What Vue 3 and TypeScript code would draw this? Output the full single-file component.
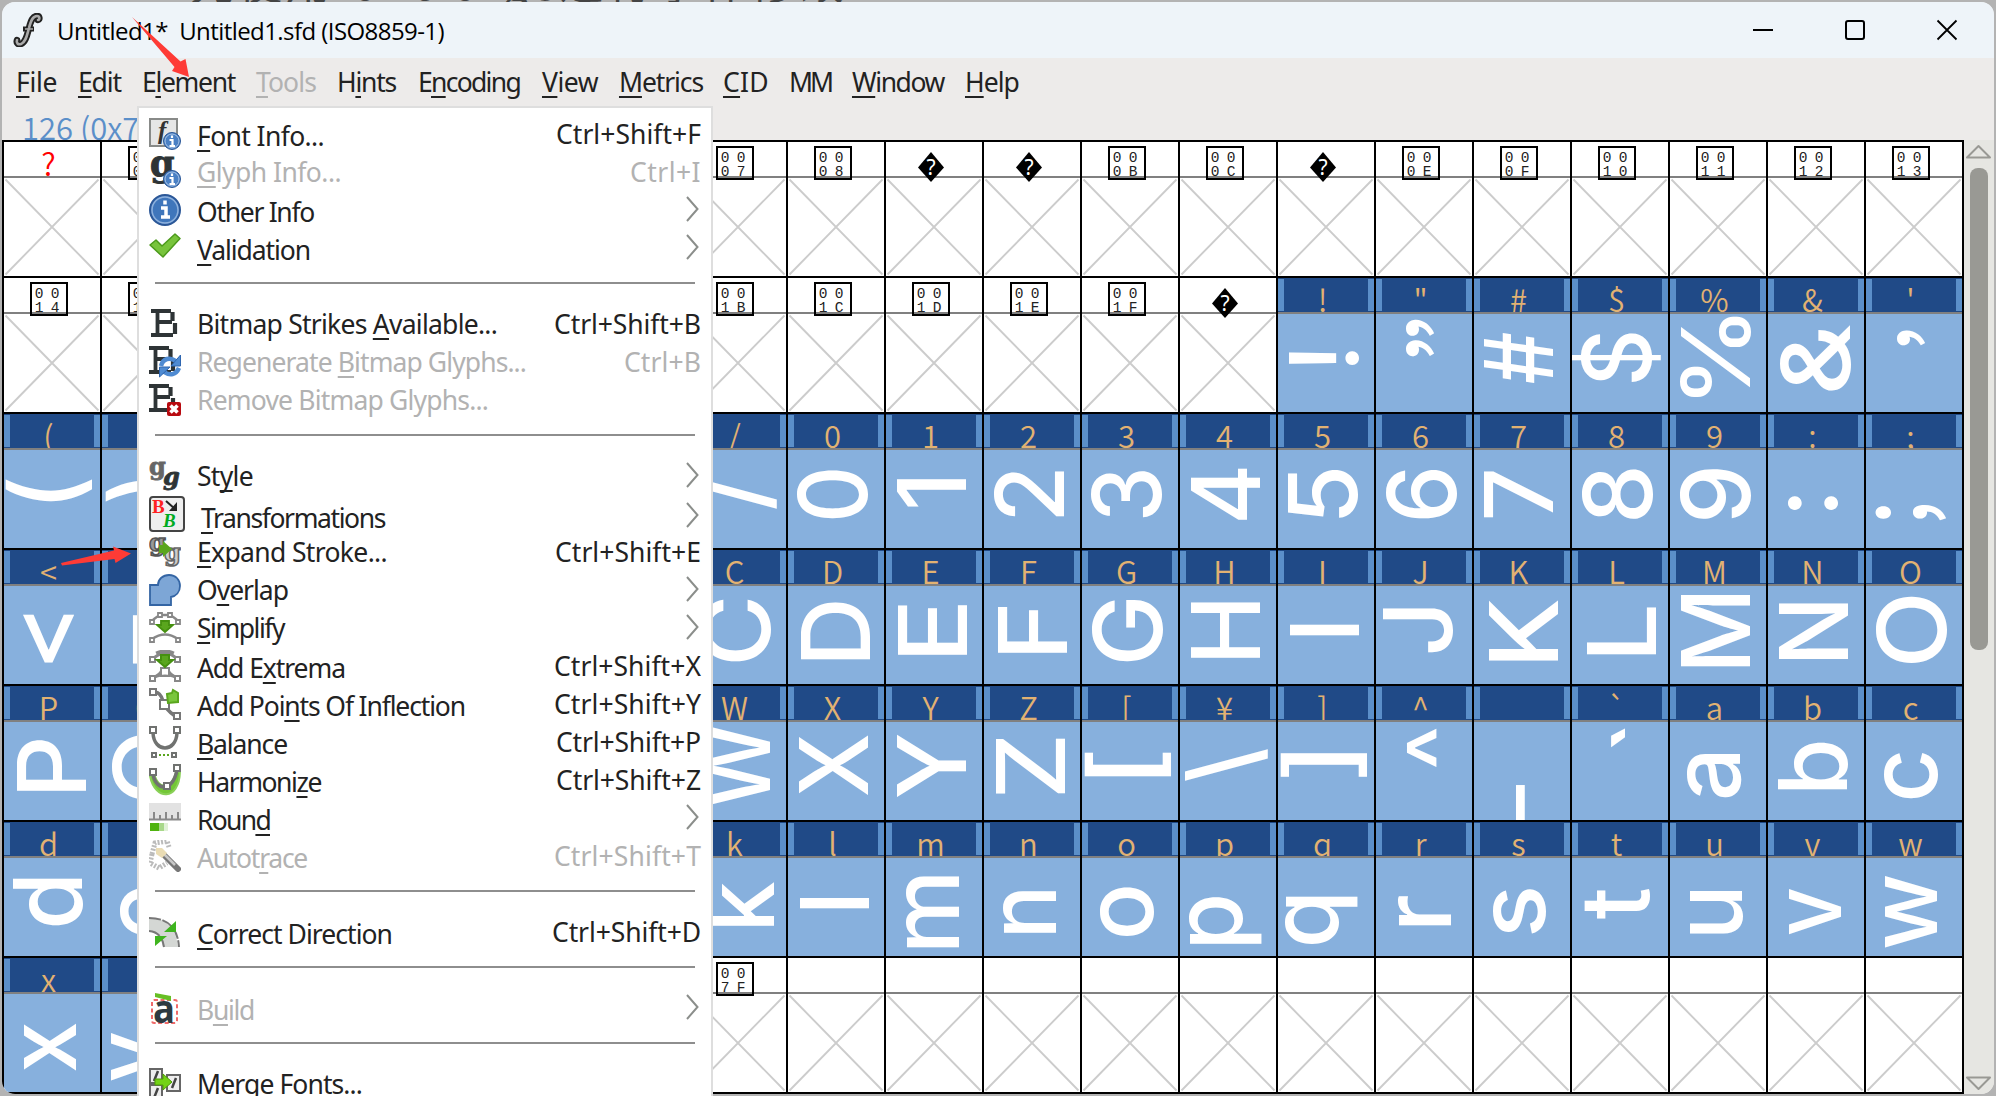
<script setup lang="ts">
type Kind = 'hex' | 'unknown' | 'missing' | 'glyph' | 'empty'
interface Cell { kind: Kind; label: string; ch: string; curly: boolean; transform: string }
interface MenuItem {
  sep?: boolean
  icon?: string
  label?: string
  key?: number
  width?: number
  drop?: number
  shortcut?: string
  sw?: number
  sub?: boolean
  disabled?: boolean
}

const menus = [
  { t: 'File', k: 0, x: 16, w: 41 },
  { t: 'Edit', k: 0, x: 78, w: 43 },
  { t: 'Element', k: 1, x: 142, w: 93 },
  { t: 'Tools', k: 0, x: 256, w: 60, off: true },
  { t: 'Hints', k: 1, x: 337, w: 59 },
  { t: 'Encoding', k: 1, x: 418, w: 102 },
  { t: 'View', k: 0, x: 542, w: 56 },
  { t: 'Metrics', k: 0, x: 619, w: 84 },
  { t: 'CID', k: 0, x: 723, w: 46 },
  { t: 'MM', k: -1, x: 789, w: 42 },
  { t: 'Window', k: 0, x: 852, w: 92 },
  { t: 'Help', k: 0, x: 965, w: 54 },
].map((m, i, all) => ({ ...m, gap: i ? m.x - all[i - 1].x - all[i - 1].w : m.x - 2 }))

const items: MenuItem[] = [
  { icon: 'font', label: 'Font Info...', key: 0, width: 127, drop: 2, shortcut: 'Ctrl+Shift+F', sw: 145 },
  { icon: 'glyph', label: 'Glyph Info...', key: 0, width: 144, shortcut: 'Ctrl+I', sw: 71, disabled: true },
  { icon: 'info', label: 'Other Info', key: -1, width: 117, drop: 2, sub: true },
  { icon: 'check', label: 'Validation', key: 0, width: 113, drop: 2, sub: true },
  { sep: true },
  { icon: 'bitmap', label: 'Bitmap Strikes Available...', key: 15, width: 300, shortcut: 'Ctrl+Shift+B', sw: 147 },
  { icon: 'regen', label: 'Regenerate Bitmap Glyphs...', key: 11, width: 329, shortcut: 'Ctrl+B', sw: 77, disabled: true },
  { icon: 'remove', label: 'Remove Bitmap Glyphs...', key: -1, width: 291, disabled: true },
  { sep: true },
  { icon: 'style', label: 'Style', key: 2, width: 56, sub: true },
  { icon: 'transform', label: 'Transformations', key: 0, width: 184, drop: 4, sub: true },
  { icon: 'expand', label: 'Expand Stroke...', key: 0, width: 190, shortcut: 'Ctrl+Shift+E', sw: 146 },
  { icon: 'overlap', label: 'Overlap', key: 1, width: 91, sub: true },
  { icon: 'simplify', label: 'Simplify', key: 0, width: 87, sub: true },
  { icon: 'extrema', label: 'Add Extrema', key: 5, width: 148, drop: 2, shortcut: 'Ctrl+Shift+X', sw: 147 },
  { icon: 'inflect', label: 'Add Points Of Inflection', key: 7, width: 268, drop: 2, shortcut: 'Ctrl+Shift+Y', sw: 147 },
  { icon: 'balance', label: 'Balance', key: 0, width: 90, drop: 2, shortcut: 'Ctrl+Shift+P', sw: 145 },
  { icon: 'harmonize', label: 'Harmonize', key: 7, width: 124, drop: 2, shortcut: 'Ctrl+Shift+Z', sw: 145 },
  { icon: 'round', label: 'Round', key: 4, width: 73, drop: 2, sub: true },
  { icon: 'autotrace', label: 'Autotrace', key: 5, width: 110, drop: 2, shortcut: 'Ctrl+Shift+T', sw: 147, disabled: true },
  { sep: true },
  { icon: 'direction', label: 'Correct Direction', key: 0, width: 195, drop: 2, shortcut: 'Ctrl+Shift+D', sw: 149 },
  { sep: true },
  { icon: 'build', label: 'Build', key: 1, width: 57, drop: 2, sub: true, disabled: true },
  { sep: true },
  { icon: 'merge', label: 'Merge Fonts...', key: -1, width: 165 },
]

function parts(text: string, key: number): [string, string, string] {
  return key < 0 ? [text, '', ''] : [text.slice(0, key), text[key], text.slice(key + 1)]
}

/* Spreads or tightens the letters of a line so that it takes the given width. */
const vFit = {
  mounted(el: HTMLElement, binding: { value: number }) {
    const count = (el.textContent ?? '').length
    el.style.letterSpacing = (binding.value - el.getBoundingClientRect().width) / count + 'px'
  },
}

/* Centre of the ink in the cell body, and its extent along the baseline. */
const ink: Record<string, [number, number, number?]> = {
  '!': [46, 44], '"': [44.5, 23.7, 37], '#': [44, 44, 51], $: [44.7, 44, 50], '%': [45.5, 43, 82], '&': [47, 44, 66],
  "'": [45.5, 24.2, 16], '(': [44, 40], ')': [46, 41], '/': [45.5, 43],
  '0': [44.7, 44, 49], '1': [45, 43, 28], '2': [45, 44, 46], '3': [44.7, 44, 47], '4': [45, 44, 52], '5': [44.7, 44, 49],
  '6': [45, 44, 49], '7': [44.5, 44, 47], '8': [45, 44, 50], '9': [45, 44, 50],
  ':': [45, 53], ';': [45, 62.3, 16], '<': [44.7, 53, 49], '=': [45, 53, 49],
  C: [45.3, 44.5, 62], D: [47.7, 45, 58], E: [46.4, 44, 51], F: [48, 44, 47], G: [45.3, 44.5, 62], H: [45, 44, 57],
  I: [46, 44], J: [42.4, 44.3, 44], K: [49.3, 44.5, 61], L: [49, 45, 48], M: [45.3, 44.6, 73], N: [45, 45, 57], O: [45, 43.8, 67],
  P: [47.4, 43.5, 52], Q: [48, 45, 66], W: [45, 44, 83], X: [45.5, 43.5, 60], Y: [45, 44, 63], Z: [46.4, 44, 56],
  '[': [45.8, 42.8, 25], '\\': [46, 43], ']': [45.5, 42.8, 25], '^': [45.7, 26, 39], _: [46, 85, 44], '`': [46.4, 15.5, 20],
  a: [44, 53.5, 45], b: [45.4, 44, 48], c: [44.8, 53.6, 46], d: [43.7, 44, 47], e: [44.8, 53.5, 48], k: [49, 46, 45], l: [46, 45],
  m: [46, 54, 72], n: [45.5, 54, 43], o: [44.5, 54, 49], p: [45.5, 62.5, 48], q: [43.5, 62.5, 48], r: [48.8, 53, 30],
  s: [45, 53.5, 45], t: [45, 46, 31], u: [46.3, 54.5, 44], v: [46.6, 53.5, 46], w: [45, 53.5, 73], x: [45.5, 53, 48], y: [45, 62.5, 48],
}

const shapeFor: Record<string, string> = { '"': '”', "'": '’' }
const ctx = document.createElement('canvas').getContext('2d')!

function place(source: string, ch: string, curly: boolean): string {
  ctx.font = curly ? '500 95px "Noto Sans CJK SC", sans-serif' : '500 95px Inter, sans-serif'
  const [cx, cy, extent] = ink[source] ?? [45, 44]
  const m = ctx.measureText(ch)
  const width = m.actualBoundingBoxRight + m.actualBoundingBoxLeft
  const scale = extent ? extent / width : 1
  const midX = ((m.actualBoundingBoxRight - m.actualBoundingBoxLeft) / 2) * scale
  const midY = (m.actualBoundingBoxDescent - m.actualBoundingBoxAscent) / 2
  return `translate(${cx - midY} ${cy + midX}) rotate(-90) scale(${scale} 1)`
}

function plain(kind: Kind, label = ''): Cell {
  return { kind, label, ch: '', curly: false, transform: '' }
}

const cells: Cell[] = []
for (let code = 0; code < 140; code++) {
  if (code === 0) cells.push(plain('missing', '?'))
  else if ([9, 10, 13, 32].includes(code)) cells.push(plain('unknown'))
  else if (code < 32 || code === 127) cells.push(plain('hex', code.toString(16).toUpperCase().padStart(4, '0')))
  else if (code < 127) {
    const c = String.fromCharCode(code)
    const ch = shapeFor[c] ?? c
    const curly = c === '"' || c === "'" || c === ';'
    const label = c === '\\' ? '¥' : c === '_' ? '' : c
    cells.push({ kind: 'glyph', label, ch, curly, transform: place(c, ch, curly) })
  } else cells.push(plain('empty'))
}
</script>

<template>
  <div class="desktop">
    <div class="behind"><span>先使用fontforge进行字体修改</span></div>
    <div class="window">
      <header class="titlebar">
        <svg class="logo" width="30" height="34" viewBox="0 0 30 34">
          <path d="M4 27c-1 3 1 5 4 4 5-2 6-9 8-16 2-8 4-12 8-12 3 0 3 4 1 4" fill="none" stroke="#222" stroke-width="6.500" stroke-linecap="round" />
          <path d="M10 16h11" stroke="#222" stroke-width="5" />
          <path d="M4 27c-1 3 1 5 4 4 5-2 6-9 8-16 2-8 4-12 8-12 3 0 3 4 1 4" fill="none" stroke="#aaa" stroke-width="2.600" stroke-linecap="round" />
          <path d="M12 16h8" stroke="#aaa" stroke-width="1.600" />
        </svg>
        <span v-fit="387" class="title">Untitled1*&nbsp; Untitled1.sfd (ISO8859-1)</span>
        <div class="controls">
          <svg width="22" height="22" viewBox="0 0 22 22"><path d="M1 11h20" stroke="#000" stroke-width="2" /></svg>
          <svg width="22" height="22" viewBox="0 0 22 22"><rect x="2" y="2" width="18" height="18" rx="2" fill="none" stroke="#000" stroke-width="2" /></svg>
          <svg width="22" height="22" viewBox="0 0 22 22"><path d="M1.500 1.500l19 19M20.500 1.500l-19 19" stroke="#000" stroke-width="1.800" /></svg>
        </div>
      </header>

      <nav class="menubar">
        <span v-for="m in menus" :key="m.t" v-fit="m.w" :class="{ off: m.off }" :style="{ marginLeft: m.gap + 'px' }">{{ parts(m.t, m.k)[0] }}<u>{{ parts(m.t, m.k)[1] }}</u>{{ parts(m.t, m.k)[2] }}</span>
      </nav>
      <div class="status">126 (0x7E)</div>

      <main class="content">
        <div class="grid">
          <div v-for="(c, i) in cells" :key="i" class="cell" :class="c.kind">
            <div class="head">
              <span v-if="c.kind === 'glyph' || c.kind === 'missing'" class="name">{{ c.label }}</span>
              <svg v-else-if="c.kind === 'hex'" class="box" width="38" height="34">
                <rect x="1" y="1" width="36" height="32" fill="none" stroke="#000" stroke-width="2" />
                <g font-family="'Liberation Mono', monospace" font-size="14.500" fill="#222" text-anchor="middle">
                  <text x="9" y="16">{{ c.label[0] }}</text><text x="25" y="16">{{ c.label[1] }}</text>
                  <text x="9" y="30">{{ c.label[2] }}</text><text x="25" y="30">{{ c.label[3] }}</text>
                </g>
              </svg>
              <svg v-else-if="c.kind === 'unknown'" class="diamond" width="28" height="32">
                <path d="M14 1L27 16.500 14 31 1 16.500z" />
                <text x="14" y="24" fill="#fff" font-family="'Noto Sans', sans-serif" font-size="21" text-anchor="middle">?</text>
              </svg>
            </div>
            <svg class="body" width="96" height="98" viewBox="0 0 96 98">
              <text v-if="c.kind === 'glyph'" class="shape" :class="{ curly: c.curly }" :transform="c.transform">{{ c.ch }}</text>
              <path v-else d="M1.500 1.500l93 95M94.500 1.500l-93 95" stroke="#ccc" stroke-width="1.900" />
            </svg>
          </div>
        </div>
        <aside class="scroll">
          <svg width="28" height="28"><path d="M3 17.500h23L14.500 6z" fill="none" stroke="#999994" stroke-width="2" stroke-linejoin="round" /></svg>
          <div class="thumb"></div>
          <svg width="28" height="20"><path d="M3 3.500h23L14.500 15z" fill="none" stroke="#999994" stroke-width="2" stroke-linejoin="round" /></svg>
        </aside>
      </main>
    </div>

    <div class="menu">
      <template v-for="(it, i) in items" :key="i">
        <div v-if="it.sep" class="sep"></div>
        <div v-else class="item" :class="{ disabled: it.disabled, big: it.icon === 'transform' }">
          <svg class="icon" :width="it.icon === 'transform' ? 36 : 32" :height="it.icon === 'transform' ? 36 : 32" :viewBox="it.icon === 'transform' ? '0 0 36 36' : '0 0 32 32'">
            <g v-if="it.icon === 'font'">
              <rect x="1" y="1" width="27" height="27" fill="#e6e6e6" stroke="#888a88" stroke-width="2" />
              <text x="9" y="21" font-family="'Liberation Serif', serif" font-style="italic" font-weight="bold" font-size="25" fill="#333">f</text>
            </g>
            <text v-if="it.icon === 'glyph'" x="1" y="20" font-family="'DejaVu Serif', serif" font-weight="bold" font-size="35" fill="#2e3436" stroke="#2e3436">g</text>
            <g v-if="it.icon === 'font' || it.icon === 'glyph'">
              <circle cx="23" cy="23" r="8.500" fill="#4a80c4" stroke="#2b5797" />
              <circle cx="23" cy="23" r="7" fill="none" stroke="#a9c4e6" />
              <path d="M23 17.500v2.500M20.500 22h3v6M20.500 28h5.500" stroke="#fff" stroke-width="2.200" fill="none" />
            </g>
            <g v-if="it.icon === 'info'">
              <circle cx="16" cy="16" r="15" fill="#3f76bb" stroke="#2b5797" stroke-width="2" />
              <circle cx="16" cy="16" r="13" fill="none" stroke="#8fb1dc" stroke-width="1.500" />
              <path d="M16 6.500v4M12 14h5v10M12 23h9" stroke="#fff" stroke-width="3.500" fill="none" />
            </g>
            <path v-if="it.icon === 'check'" d="M1 13l6-5 6 6L26 2l5 4.500L14 25z" fill="#78c43c" stroke="#4c9a1c" stroke-width="1.500" stroke-linejoin="round" />
            <g v-if="it.icon === 'bitmap' || it.icon === 'regen' || it.icon === 'remove'" :transform="it.icon === 'bitmap' ? 'translate(2 1)' : ''">
              <path d="M0 2h20M6 13h15M0 26h22M6.500 2v24" stroke="#2e3436" stroke-width="3.800" fill="none" />
              <path d="M21.500 3v9M24 14v11" stroke="#2e3436" stroke-width="4.200" fill="none" />
            </g>
            <g v-if="it.icon === 'regen'" fill="none" stroke="#4f8bd2" stroke-width="4.500">
              <path d="M12 20c2-8 9-9 15-5M30 22c-3 7-9 8-15 4" />
              <path d="M31.500 9v11H22zM10.500 31V21H21z" fill="#4f8bd2" stroke="#2f66b0" stroke-width="1" />
            </g>
            <g v-if="it.icon === 'remove'">
              <rect x="18" y="18" width="14" height="14" rx="2" fill="#b80a10" />
              <path d="M21.500 21.500l7 7M28.500 21.500l-7 7" stroke="#fff" stroke-width="3.600" />
            </g>
            <g v-if="it.icon === 'style'" font-family="'DejaVu Serif', serif" font-weight="bold" font-size="24">
              <text x="0" y="15" fill="#666" stroke="#666" stroke-width=".8">g</text><text x="14" y="25" font-style="italic" fill="#2e3436" stroke="#2e3436" stroke-width=".8">g</text>
            </g>
            <g v-if="it.icon === 'transform'">
              <rect x="1" y="1" width="34" height="34" rx="3" fill="#eee" stroke="#444" stroke-width="2" />
              <g font-family="'Liberation Serif', serif" font-weight="bold" font-size="19">
                <text x="3" y="17" fill="#ff2222">B</text>
                <text x="14" y="31" fill="#00aa22" font-style="italic">B</text>
              </g>
              <path d="M17 5l9 8" stroke="#222" stroke-width="2" /><path d="M28 6v9h-8z" fill="#222" />
            </g>
            <g v-if="it.icon === 'expand'">
              <g font-family="'DejaVu Serif', serif" font-weight="bold" font-size="24">
                <text x="0" y="15" fill="#999" stroke="#555" stroke-width="1.500">g</text><text x="15" y="25" fill="#ccc" stroke="#666" stroke-width="1.500">g</text>
              </g>
              <path d="M10 9h4V5l9 8-9 8v-4h-4z" fill="#5aa61e" />
            </g>
            <path v-if="it.icon === 'overlap'" d="M1 11h8C9 5 14 1 20 1c7 0 11 5 11 11s-4 10-9 11v8H1z" fill="#7da6d6" stroke="#3465a4" stroke-width="1.800" />
            <g v-if="it.icon === 'simplify'" fill="none" stroke="#888" stroke-width="1.800">
              <path d="M3 9Q8 4 12 3h8Q24 4 29 9M3 27Q16 18 29 27" stroke-width="2.600" />
              <path d="M1 8h4v4H1zM9 1h4v4H9zM19 1h4v4h-4zM27 8h4v4h-4zM1 26h4v4H1zM27 26h4v4h-4z" fill="#fff" />
              <path d="M12 9h8v4h4l-8 7-8-7h4z" fill="#5aa61e" stroke="#459010" />
            </g>
            <g v-if="it.icon === 'extrema'" fill="none" stroke="#888" stroke-width="2">
              <path d="M3 10Q16-4 29 10M7 3q9-4 18 0M3 28q8-3 10-8M29 28q-8-3-10-8" stroke-width="3" />
              <path d="M1 7h5v5H1zM26 7h5v5h-5zM1 26h5v5H1zM26 26h5v5h-5zM12 18h8v8h-8z" fill="#fff" />
              <path d="M6 27q10-3 20 0" />
              <path d="M12 5h8v5h4l-8 7-8-7h4z" fill="#5aa61e" stroke="#459010" />
            </g>
            <g v-if="it.icon === 'inflect'" fill="none" stroke="#777" stroke-width="2">
              <path d="M6 4q6 1 8 9t12 15" stroke-width="3.500" />
              <path d="M1 1h6v6H1zM11 12h9v9h-9zM25 25h6v6h-6z" fill="#fff" />
              <path d="M18 6l5-1 1-3 5 3v9l-10 1z" fill="#79c63c" stroke="#5aa61e" />
            </g>
            <g v-if="it.icon === 'balance'" fill="none" stroke="#707270" stroke-width="2">
              <path d="M4 7c1 20 23 20 24 0" stroke-width="3.500" />
              <path d="M1 1h6v6H1zM25 1h6v6h-6zM3 27h4v4H3zM23 27h4v4h-4z" fill="#fff" />
              <path d="M10 29h11" stroke="#5aa61e" stroke-dasharray="2 2" />
            </g>
            <g v-if="it.icon === 'harmonize'" fill="none" stroke="#707270" stroke-width="2">
              <path d="M1 12c5 25 29 25 30-4l-4 0c-4 16-16 20-22 2z" fill="#73c736" stroke="#8ad058" />
              <path d="M4 10c3 18 20 18 24-4" stroke-width="3.500" />
              <path d="M1 5h6v6H1zM25 1h6v6h-6zM15 19h6v6h-6z" fill="#fff" />
            </g>
            <g v-if="it.icon === 'round'">
              <rect x="0" y="1" width="32" height="17" fill="#e2e2e2" />
              <path d="M0 17.500h32M5 10v7M11 13v4M17 10v7M23 13v4M29 10v7" stroke="#888" stroke-width="2" />
              <rect x="1" y="21" width="9" height="8" fill="#4fb30f" /><rect x="10" y="21" width="5" height="8" fill="#a8d88a" /><rect x="15" y="21" width="4" height="8" fill="#e0f1d6" />
            </g>
            <g v-if="it.icon === 'autotrace'">
              <path d="M3 14L6 3l12-2 2 6M3 14l-2 9 9 5 8-5" fill="none" stroke="#bbb" stroke-width="5" stroke-dasharray="2 1.500" />
              <path d="M12 12l17 17" stroke="#777" stroke-width="6" stroke-linecap="round" />
              <path d="M10 9l16 16" stroke="#c8c8c8" stroke-width="2.500" />
              <path d="M7 8l6 0 5 5-5 5-6-4z" fill="#eadcb4" />
            </g>
            <g v-if="it.icon === 'direction'">
              <path d="M0 2q26 0 29 29H14Q12 18 0 15z" fill="#d4d7d4" />
              <path d="M0 2q28 0 30 29M0 15q13 1 15 16" fill="none" stroke="#777" stroke-width="2" stroke-dasharray="12 1.500" />
              <path d="M15 16h12V5zM6 30V20h12z" fill="#3fb51f" />
            </g>
            <g v-if="it.icon === 'build'">
              <rect x="3" y="8" width="25" height="23" rx="2" fill="none" stroke="#f06a6a" stroke-width="2" stroke-dasharray="4 2.500" />
              <text x="4" y="31" font-family="'Open Sans', sans-serif" font-weight="bold" font-size="39" textLength="22" lengthAdjust="spacingAndGlyphs" fill="#2e3a40">a</text>
              <path d="M6 1l16 3v5L6 5z" fill="#67bf24" />
            </g>
            <g v-if="it.icon === 'merge'">
              <path d="M1 1h12v14H1zM1 17h12v14H1zM18 7h13v16H18z" fill="#eee" stroke="#666" stroke-width="2" />
              <path d="M9 3L5 13M9 20L5 30M27 10l-4 10" stroke="#444" stroke-width="2.500" />
              <path d="M6 11h8V6l9 8-9 8v-5H6z" fill="#73d216" stroke="#4e9a06" />
            </g>
          </svg>
          <span v-fit="it.width" class="label" :style="{ marginTop: (it.drop ?? 0) * 2 + 'px' }">{{ parts(it.label!, it.key!)[0] }}<u>{{ parts(it.label!, it.key!)[1] }}</u>{{ parts(it.label!, it.key!)[2] }}</span>
          <span v-if="it.shortcut" v-fit="it.sw" class="shortcut">{{ it.shortcut }}</span>
          <svg v-if="it.sub" class="arrow" width="14" height="26" viewBox="0 0 14 26"><path d="M1 1l10.500 12L1 25" fill="none" stroke="#8b8e8b" stroke-width="2" /></svg>
        </div>
      </template>
    </div>

    <svg class="marks" width="260" height="600">
      <path d="M132 17L180.500 61.500 185.500 59 189 77 172 71 174.500 67z" fill="#fe3b36" />
      <path d="M61 563L114 550.500 113 546.500 131 553.500 115.500 563 114.500 559 62 565.500z" fill="#fe3b36" />
    </svg>
  </div>
</template>

<style>
body { margin: 0; overflow: hidden; }
</style>

<style scoped>
.desktop { position: relative; width: 1996px; height: 1096px; overflow: hidden; background: #b3b3b3; box-sizing: border-box; padding: 2px; }
.behind { position: absolute; left: 190px; top: 0; height: 2px; width: 700px; overflow: hidden; color: #444; font: 44px/44px "Noto Sans CJK SC", sans-serif; letter-spacing: 4px; white-space: nowrap; }
.behind span { display: block; margin-top: -41px; }
.window { position: relative; width: 1992px; height: 1092px; border-radius: 13px; overflow: hidden; background: #edebea; }
.titlebar { height: 56px; background: #eef4f9; display: flex; align-items: center; }
.logo { margin-left: 11px; flex: none; }
.title { margin-left: 14px; margin-top: 1px; font: 24px/30px "Open Sans", sans-serif; color: #000; white-space: nowrap; }
.controls { margin-left: auto; display: flex; gap: 70px; padding-right: 36px; }
.menubar { height: 50px; display: flex; align-items: flex-start; }
.menubar span { font: 26.5px/36px "Noto Sans", sans-serif; color: #222; white-space: nowrap; margin-top: 6px; flex: none; }
.menubar span.off { color: #b2b2b2; }
u { text-decoration: underline; text-decoration-thickness: 2px; text-underline-offset: 4px; text-decoration-skip-ink: none; }
.status { height: 32px; overflow: hidden; padding-left: 20px; font: 350 31px/38px "Noto Sans CJK SC", sans-serif; color: #5b8fc9; }
.content { display: flex; height: 954px; }
.grid { display: grid; grid-template-columns: repeat(20, 98px); grid-auto-rows: 136px; border-left: 2px solid #000; border-top: 2px solid #000; background: #fff; flex: none; }
.cell { border-right: 2px solid #000; border-bottom: 2px solid #000; position: relative; }
.head { height: 34px; border-bottom: 2px solid #808080; display: flex; }
.glyph .head { background: linear-gradient(90deg, #5b8fc9 6px, transparent 6px, transparent 90px, #5b8fc9 90px) 0 1px / 100% 32px no-repeat, #204a87; overflow: hidden; }
.name { width: 89px; height: 34px; text-align: center; font: 350 31px/42px "Noto Sans CJK SC", sans-serif; color: #e2b272; }
.missing .name { color: #f00; }
.box { position: absolute; left: 26px; top: 4px; }
.diamond { position: absolute; left: 31px; top: 9px; }
.body { display: block; }
.glyph .body { background: #87b0dd; }
.shape { font: 500 95px Inter, sans-serif; fill: #fff; }
.shape.curly { font-family: "Noto Sans CJK SC", sans-serif; }
.scroll { flex: 1; background: #e6e6e2; display: flex; flex-direction: column; }
.scroll svg { flex: none; }
.thumb { width: 18px; height: 482px; border-radius: 8px; background: #999994; margin: 0 0 auto 6px; }
.menu { position: absolute; left: 137px; top: 106px; width: 572px; height: 1000px; border: 2px solid #dedede; background: #fff; padding-top: 7px; }
.item { height: 38px; display: flex; align-items: center; padding: 0 10px; font: 26.5px/36px "Noto Sans", sans-serif; color: #222; white-space: nowrap; }
.item.disabled { color: #b2b2b2; }
.icon { flex: none; margin-right: 16px; }
.shortcut { margin-left: auto; }
.arrow { margin-left: auto; margin-right: 1px; margin-top: -2px; }
.big .arrow { margin-top: 2px; }
.sep { height: 2px; margin: 15px 16px 21px; background: #8e8e8e; }
.marks { position: absolute; left: 0; top: 0; }
</style>
